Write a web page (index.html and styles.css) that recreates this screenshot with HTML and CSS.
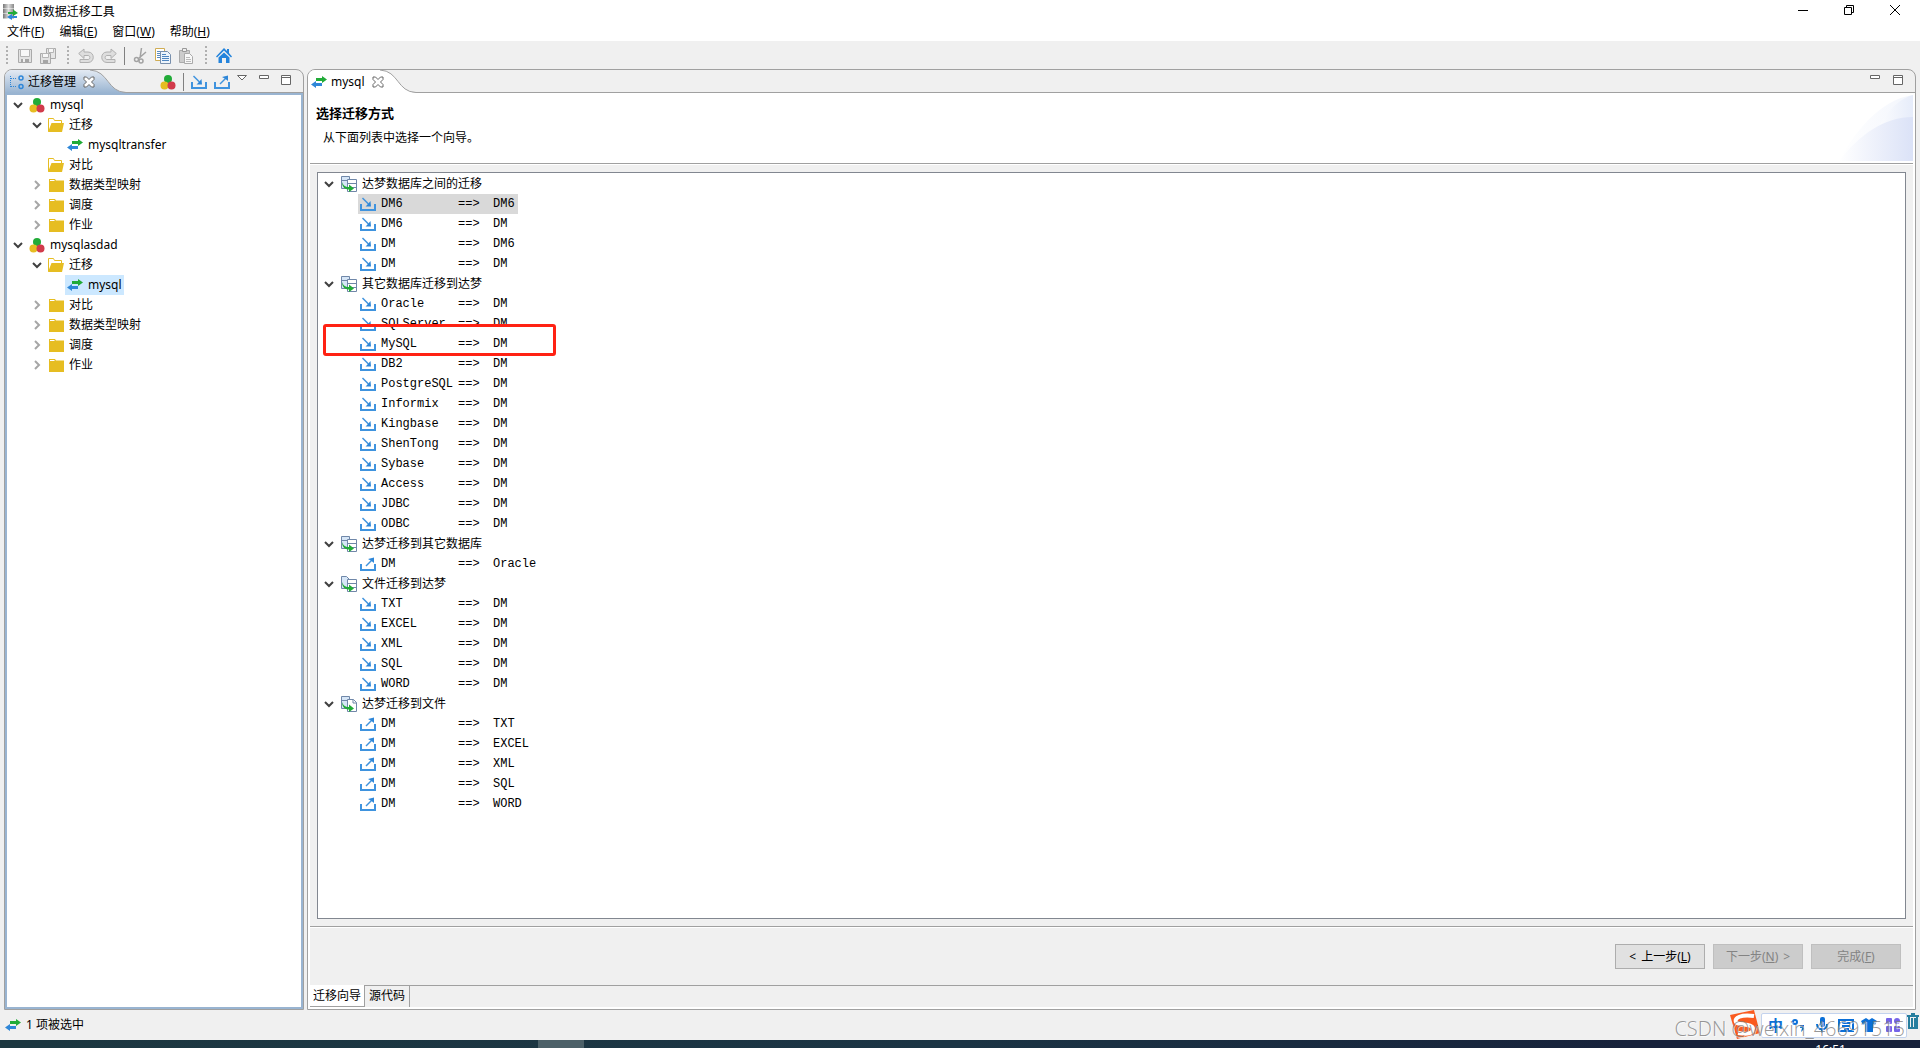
FILE: index.html
```html
<!DOCTYPE html>
<html lang="zh-CN">
<head>
<meta charset="utf-8">
<title>DM数据迁移工具</title>
<link rel="stylesheet" href="styles.css">
</head>
<body>
<svg class="sprite" aria-hidden="true">
  <defs>
    <linearGradient id="g-tab" gradientUnits="userSpaceOnUse" x1="0" y1="0" x2="0" y2="23"><stop offset="0" stop-color="#e3eaf3"/><stop offset="1" stop-color="#99b4d1"/></linearGradient>
    <linearGradient id="g-swoosh" x1="0" y1="0" x2="1" y2="0"><stop offset="0" stop-color="#fff"/><stop offset="1" stop-color="#dbe2f7"/></linearGradient>
    <linearGradient id="g-swoosh2" x1="0" y1="0" x2="1" y2="0"><stop offset="0" stop-color="#fff"/><stop offset="1" stop-color="#e6ecfa"/></linearGradient>
    <linearGradient id="g-db" x1="0" y1="0" x2="1" y2="0"><stop offset="0" stop-color="#777"/><stop offset=".5" stop-color="#ddd"/><stop offset="1" stop-color="#888"/></linearGradient>
  </defs>
  <symbol id="app" viewBox="0 0 16 16"><path fill="url(#g-db)" d="M0 0h11v4.500H0zM0 5h11v4.500H0zM0 10h11v4.500H0z"/><path fill="#21ab38" d="M5 8h5V5.500l5 3.500-5 3V10H5z"/><path fill="#2f87d8" d="M14 12h-5v-2L4 13l5 3v-2h5z"/></symbol>
  <symbol id="transfer" viewBox="0 0 16 16"><path fill="#21ab38" d="M5 4h6V2l5 3.500L11 9V7H5z"/><path fill="#2f87d8" d="M11 9H5V7l-5 3.500L5 14v-2h6z"/></symbol>
  <symbol id="balls" viewBox="0 0 16 16"><circle cx="8" cy="5" r="4" fill="#21ab38"/><circle cx="4.500" cy="11.500" r="4" fill="#e6bd22"/><circle cx="11.500" cy="11.500" r="4" fill="#d13b4b"/></symbol>
  <symbol id="down" viewBox="0 0 10 10"><path fill="none" stroke="#404040" stroke-width="2" d="M1 3l4 4 4-4"/></symbol>
  <symbol id="right" viewBox="0 0 10 10"><path fill="none" stroke="#a6a6a6" stroke-width="2" d="M3 1l4 4-4 4"/></symbol>
  <symbol id="open" viewBox="0 0 16 16"><path fill="#fff" stroke="#e6bd22" d="M.5 14.500v-13h5l1 2h7v3"/><path fill="#e6bd22" d="M3.500 6H16l-2 9H0z"/></symbol>
  <symbol id="folder" viewBox="0 0 16 16"><path fill="#e6bd22" d="M1 2h6l1 1.500h8V15H1z"/><path stroke="#fff" d="M2 3.500h4.500"/></symbol>
  <symbol id="import" viewBox="0 0 16 16"><path fill="none" stroke="#3f93de" stroke-width="2" d="M1 8v6h14V8"/><path fill="none" stroke="#3f93de" stroke-width="1.500" d="M2.500 2l6 6"/><path fill="#2f87d8" d="M11 10.500H5.500L8 8l2.500-3z"/></symbol>
  <symbol id="export" viewBox="0 0 16 16"><path fill="none" stroke="#3f93de" stroke-width="2" d="M1 8v6h14V8"/><path fill="none" stroke="#3f93de" stroke-width="1.500" d="M6 10l6-6"/><path fill="#2f87d8" d="M14 1.500V7l-2.500-2L8 3z"/></symbol>
  <symbol id="tables" viewBox="0 0 16 16"><path fill="#d6e6f7" stroke="#6f87a8" d="M.5.5h8v12h-8zM.5 4.500h8"/><path fill="#fff" stroke="#6f87a8" d="M6.500 3.500h9v12h-9zM6.500 7.500h9M6.500 11.500h9"/><path fill="#21ab38" d="M1 6c1 3 3 5 7 5V8.500l5 4-5 3.500v-2.500C4 13.500 1 11 1 6z"/></symbol>
  <symbol id="filetable" viewBox="0 0 16 16"><path fill="#d6e6f7" stroke="#6f87a8" d="M.5.5h5l3 3v9h-8z"/><path fill="#fff" stroke="#6f87a8" d="M6.500 3.500h9v12h-9zM6.500 7.500h9M6.500 11.500h9"/><path fill="#21ab38" d="M1 6c1 3 3 5 7 5V8.500l5 4-5 3.500v-2.500C4 13.500 1 11 1 6z"/></symbol>
  <symbol id="tablefile" viewBox="0 0 16 16"><path fill="#d6e6f7" stroke="#6f87a8" d="M.5.5h8v12h-8zM.5 4.500h8"/><path fill="#fff" stroke="#6f87a8" d="M6.500 3.500h6l3 3v9h-9zM12 3.500V7h3.500"/><path fill="#21ab38" d="M1 6c1 3 3 5 7 5V8.500l5 4-5 3.500v-2.500C4 13.500 1 11 1 6z"/></symbol>
  <symbol id="save" viewBox="0 0 16 16"><path fill="#e2e2e2" stroke="#aaa" d="M1.500 1.500h13v13h-13z"/><path fill="#f7f7f7" stroke="#b5b5b5" d="M3.500 1.500h9v7h-9z"/><path fill="#a5a5a5" d="M4 11h8v3H4z"/><path fill="#eee" d="M6 11h2v3H6z"/></symbol>
  <symbol id="saveall" viewBox="0 0 16 16"><path fill="#e6e6e6" stroke="#aaa" d="M6.500.5h9v10h-9z"/><path fill="#f7f7f7" stroke="#b5b5b5" d="M8.500.5h5v4h-5z"/><path fill="#e2e2e2" stroke="#aaa" d="M.5 5.500h10v10H.5z"/><path fill="#f7f7f7" stroke="#b5b5b5" d="M2.500 5.500h6v4h-6z"/><path fill="#a5a5a5" d="M3 12h5v3H3z"/></symbol>
  <symbol id="undo" viewBox="0 0 16 16"><path fill="#dedede" stroke="#b0b0b0" d="M.7 5.500L6 1v3h4c7 0 7 10.500 0 10.500H2v-3h8c2.500 0 2.500-4 0-4H6v3z"/></symbol>
  <symbol id="redo" viewBox="0 0 16 16"><path fill="#dedede" stroke="#b0b0b0" d="M15.300 5.500L10 1v3H6c-7 0-7 10.500 0 10.500h8v-3H6c-2.500 0-2.500-4 0-4h4v3z"/></symbol>
  <symbol id="cut" viewBox="0 0 16 16"><g fill="none" stroke="#a3a3a3" stroke-width="1.500"><path d="M9.500 0L8 10M14 4L6 11"/><circle cx="4.500" cy="11.500" r="2"/><circle cx="9" cy="13" r="2"/></g></symbol>
  <symbol id="copy" viewBox="0 0 16 16"><path fill="#fff" stroke="#d0ad54" d="M.5.5h9v12h-9z"/><path stroke="#5b8cc0" d="M2 3.500h5M2 5.500h5M2 7.500h3M2 9.500h3"/><path fill="#eef5fc" stroke="#788fac" d="M5.500 3.500h7l3 3v9h-10z"/><path stroke="#4f86c0" d="M7 6.500h4M7 8.500h7M7 10.500h7M7 12.500h7"/></symbol>
  <symbol id="paste" viewBox="0 0 16 16"><path fill="#ccc" stroke="#aaa" d="M1.500 2.500h10v12h-10z"/><path fill="#eee" stroke="#999" d="M4.500.5h4v3h-4z"/><path fill="#f8f8f8" stroke="#aaa" d="M6.500 5.500h5l3 3v7h-8z"/><path stroke="#bbb" d="M8 9.500h4M8 11.500h5M8 13.500h5"/></symbol>
  <symbol id="home" viewBox="0 0 16 16"><path fill="#2484dc" d="M8 0l3 3V1h2v4l3 3.500-1 1-7-7-7 7-1-1z"/><path fill="#2484dc" d="M8 4.500l5.500 5V15H10v-5H6v5H2.500V9.500z"/></symbol>
  <symbol id="nav" viewBox="0 0 16 16"><path fill="none" stroke="#2f87d8" stroke-dasharray="1 1" d="M1.500 2v12M2 4.500h6M2 12.500h6"/><circle cx="12" cy="4" r="2" fill="none" stroke="#2f87d8" stroke-width="1.500"/><circle cx="12" cy="12.500" r="2" fill="none" stroke="#2f87d8" stroke-width="1.500"/></symbol>
  <symbol id="close" viewBox="0 0 12 12"><path fill="#fff" stroke="#666" d="M1 1h2.500L6 3.500 8.500 1H11v2.500L8.500 6 11 8.500V11H8.500L6 8.500 3.500 11H1V8.500L3.500 6 1 3.500z"/></symbol>
  <symbol id="menu" viewBox="0 0 10 10"><path fill="#fff" stroke="#666" d="M.5.5h9L5 5z"/></symbol>
  <symbol id="min" viewBox="0 0 10 10"><path fill="#fff" stroke="#666" d="M.5.5h9v3h-9z"/></symbol>
  <symbol id="max" viewBox="0 0 10 10"><path fill="#fff" stroke="#666" d="M.5.5h9v9h-9zM.5 2.500h9"/></symbol>
</svg>

<header class="titlebar">
  <svg class="icon"><use href="#app"/></svg>
  <h1>DM数据迁移工具</h1>
  <div class="window-buttons">
    <button aria-label="最小化"><svg viewBox="0 0 12 12"><path d="M1 6.500h10"/></svg></button>
    <button aria-label="还原"><svg viewBox="0 0 12 12"><path d="M1.500 3.500h7v7h-7zM3.500 3V1.500h7v7H9"/></svg></button>
    <button aria-label="关闭"><svg viewBox="0 0 12 12"><path d="M1 1l10 10M11 1L1 11"/></svg></button>
  </div>
</header>
<nav class="menubar">
  <button>文件(<u>F</u>)</button><button>编辑(<u>E</u>)</button><button>窗口(<u>W</u>)</button><button>帮助(<u>H</u>)</button>
</nav>
<div class="toolbar">
  <i class="grip"></i>
  <button aria-label="保存"><svg class="icon"><use href="#save"/></svg></button>
  <button aria-label="全部保存"><svg class="icon"><use href="#saveall"/></svg></button>
  <i class="grip"></i>
  <button aria-label="撤销"><svg class="icon"><use href="#undo"/></svg></button>
  <button aria-label="重做"><svg class="icon"><use href="#redo"/></svg></button>
  <i class="sep"></i>
  <button aria-label="剪切"><svg class="icon"><use href="#cut"/></svg></button>
  <button aria-label="复制"><svg class="icon"><use href="#copy"/></svg></button>
  <button aria-label="粘贴"><svg class="icon"><use href="#paste"/></svg></button>
  <i class="grip"></i>
  <button aria-label="主页"><svg class="icon"><use href="#home"/></svg></button>
</div>

<main class="workbench">
  <section class="panel explorer">
    <div class="panel-head">
      <div class="tab">
        <svg class="icon"><use href="#nav"/></svg><span>迁移管理</span>
        <button aria-label="关闭视图"><svg class="close"><use href="#close"/></svg></button>
      </div>
      <svg class="tail" viewBox="0 0 36 23"><path fill="url(#g-tab)" d="M0 0C19 1 17 22 36 22.500V23H0z"/><path fill="none" stroke="#a0a0a0" d="M0 0C19 1 17 22 36 22.500"/></svg>
      <div class="view-tools">
        <button aria-label="新建工程"><svg class="icon"><use href="#balls"/></svg></button>
        <i class="sep"></i>
        <button aria-label="导入"><svg class="icon"><use href="#import"/></svg></button>
        <button aria-label="导出"><svg class="icon"><use href="#export"/></svg></button>
      </div>
      <div class="view-buttons">
        <button aria-label="视图菜单"><svg><use href="#menu"/></svg></button>
        <button aria-label="最小化视图"><svg><use href="#min"/></svg></button>
        <button aria-label="最大化视图"><svg><use href="#max"/></svg></button>
      </div>
    </div>
    <ul class="tree">
      <li class="l1"><svg class="arrow"><use href="#down"/></svg><svg class="icon"><use href="#balls"/></svg>mysql</li>
      <li class="l2"><svg class="arrow"><use href="#down"/></svg><svg class="icon"><use href="#open"/></svg>迁移</li>
      <li class="l3"><a href="#t1"><svg class="icon"><use href="#transfer"/></svg>mysqltransfer</a></li>
      <li class="l2"><svg class="arrow"></svg><svg class="icon"><use href="#open"/></svg>对比</li>
      <li class="l2"><svg class="arrow"><use href="#right"/></svg><svg class="icon"><use href="#folder"/></svg>数据类型映射</li>
      <li class="l2"><svg class="arrow"><use href="#right"/></svg><svg class="icon"><use href="#folder"/></svg>调度</li>
      <li class="l2"><svg class="arrow"><use href="#right"/></svg><svg class="icon"><use href="#folder"/></svg>作业</li>
      <li class="l1"><svg class="arrow"><use href="#down"/></svg><svg class="icon"><use href="#balls"/></svg>mysqlasdad</li>
      <li class="l2"><svg class="arrow"><use href="#down"/></svg><svg class="icon"><use href="#open"/></svg>迁移</li>
      <li class="l3"><a href="#t2" class="selected"><svg class="icon"><use href="#transfer"/></svg>mysql</a></li>
      <li class="l2"><svg class="arrow"><use href="#right"/></svg><svg class="icon"><use href="#folder"/></svg>对比</li>
      <li class="l2"><svg class="arrow"><use href="#right"/></svg><svg class="icon"><use href="#folder"/></svg>数据类型映射</li>
      <li class="l2"><svg class="arrow"><use href="#right"/></svg><svg class="icon"><use href="#folder"/></svg>调度</li>
      <li class="l2"><svg class="arrow"><use href="#right"/></svg><svg class="icon"><use href="#folder"/></svg>作业</li>
    </ul>
  </section>

  <section class="panel editor">
    <div class="panel-head">
      <div class="tab">
        <svg class="icon"><use href="#transfer"/></svg><span>mysql</span>
        <button aria-label="关闭编辑器"><svg class="close"><use href="#close"/></svg></button>
      </div>
      <svg class="tail" viewBox="0 0 36 23"><path fill="#fff" d="M0 0C19 1 17 22 36 22.500V23H0z"/><path fill="none" stroke="#a0a0a0" d="M0 0C19 1 17 22 36 22.500"/></svg>
      <div class="view-buttons">
        <button aria-label="最小化编辑区"><svg><use href="#min"/></svg></button>
        <button aria-label="最大化编辑区"><svg><use href="#max"/></svg></button>
      </div>
    </div>
    <div class="wizard">
      <div class="wizard-head">
        <div>
          <h2>选择迁移方式</h2>
          <p>从下面列表中选择一个向导。</p>
        </div>
        <svg class="swoosh" viewBox="0 0 74 66"><path fill="url(#g-swoosh2)" opacity=".5" d="M0 66C15 38 40 5 74 0V66z"/><path fill="url(#g-swoosh2)" d="M34 42C44 22 56 5 74 0V66z"/><path fill="url(#g-swoosh)" d="M0 66C20 40 45 22 74 22V66z"/></svg>
      </div>
      <div class="choices">
        <div class="group"><svg class="arrow"><use href="#down"/></svg><svg class="icon"><use href="#tables"/></svg>达梦数据库之间的迁移</div>
        <ul>
          <li class="current"><svg class="icon"><use href="#import"/></svg><span>DM6</span><span>==&gt;</span><span>DM6</span></li>
          <li><svg class="icon"><use href="#import"/></svg><span>DM6</span><span>==&gt;</span><span>DM</span></li>
          <li><svg class="icon"><use href="#import"/></svg><span>DM</span><span>==&gt;</span><span>DM6</span></li>
          <li><svg class="icon"><use href="#import"/></svg><span>DM</span><span>==&gt;</span><span>DM</span></li>
        </ul>
        <div class="group"><svg class="arrow"><use href="#down"/></svg><svg class="icon"><use href="#tables"/></svg>其它数据库迁移到达梦</div>
        <ul>
          <li><svg class="icon"><use href="#import"/></svg><span>Oracle</span><span>==&gt;</span><span>DM</span></li>
          <li><svg class="icon"><use href="#import"/></svg><span>SQLServer</span><span>==&gt;</span><span>DM</span></li>
          <li class="marked"><svg class="icon"><use href="#import"/></svg><span>MySQL</span><span>==&gt;</span><span>DM</span></li>
          <li><svg class="icon"><use href="#import"/></svg><span>DB2</span><span>==&gt;</span><span>DM</span></li>
          <li><svg class="icon"><use href="#import"/></svg><span>PostgreSQL</span><span>==&gt;</span><span>DM</span></li>
          <li><svg class="icon"><use href="#import"/></svg><span>Informix</span><span>==&gt;</span><span>DM</span></li>
          <li><svg class="icon"><use href="#import"/></svg><span>Kingbase</span><span>==&gt;</span><span>DM</span></li>
          <li><svg class="icon"><use href="#import"/></svg><span>ShenTong</span><span>==&gt;</span><span>DM</span></li>
          <li><svg class="icon"><use href="#import"/></svg><span>Sybase</span><span>==&gt;</span><span>DM</span></li>
          <li><svg class="icon"><use href="#import"/></svg><span>Access</span><span>==&gt;</span><span>DM</span></li>
          <li><svg class="icon"><use href="#import"/></svg><span>JDBC</span><span>==&gt;</span><span>DM</span></li>
          <li><svg class="icon"><use href="#import"/></svg><span>ODBC</span><span>==&gt;</span><span>DM</span></li>
        </ul>
        <div class="group"><svg class="arrow"><use href="#down"/></svg><svg class="icon"><use href="#tables"/></svg>达梦迁移到其它数据库</div>
        <ul>
          <li><svg class="icon"><use href="#export"/></svg><span>DM</span><span>==&gt;</span><span>Oracle</span></li>
        </ul>
        <div class="group"><svg class="arrow"><use href="#down"/></svg><svg class="icon"><use href="#filetable"/></svg>文件迁移到达梦</div>
        <ul>
          <li><svg class="icon"><use href="#import"/></svg><span>TXT</span><span>==&gt;</span><span>DM</span></li>
          <li><svg class="icon"><use href="#import"/></svg><span>EXCEL</span><span>==&gt;</span><span>DM</span></li>
          <li><svg class="icon"><use href="#import"/></svg><span>XML</span><span>==&gt;</span><span>DM</span></li>
          <li><svg class="icon"><use href="#import"/></svg><span>SQL</span><span>==&gt;</span><span>DM</span></li>
          <li><svg class="icon"><use href="#import"/></svg><span>WORD</span><span>==&gt;</span><span>DM</span></li>
        </ul>
        <div class="group"><svg class="arrow"><use href="#down"/></svg><svg class="icon"><use href="#tablefile"/></svg>达梦迁移到文件</div>
        <ul>
          <li><svg class="icon"><use href="#export"/></svg><span>DM</span><span>==&gt;</span><span>TXT</span></li>
          <li><svg class="icon"><use href="#export"/></svg><span>DM</span><span>==&gt;</span><span>EXCEL</span></li>
          <li><svg class="icon"><use href="#export"/></svg><span>DM</span><span>==&gt;</span><span>XML</span></li>
          <li><svg class="icon"><use href="#export"/></svg><span>DM</span><span>==&gt;</span><span>SQL</span></li>
          <li><svg class="icon"><use href="#export"/></svg><span>DM</span><span>==&gt;</span><span>WORD</span></li>
        </ul>
      </div>
      <div class="wizard-buttons">
        <button><span>&lt;</span><span>上一步(<u>L</u>)</span></button>
        <button disabled><span>下一步(<u>N</u>)</span><span>&gt;</span></button>
        <button disabled><span>完成(<u>F</u>)</span></button>
      </div>
      <div class="page-tabs"><button class="active">迁移向导</button><button>源代码</button></div>
    </div>
  </section>
</main>

<footer class="statusbar"><svg class="icon"><use href="#transfer"/></svg><span>1 项被选中</span></footer>
<div class="taskbar"><i class="task"></i><time>16:51</time></div>

<div class="ime">
  <svg class="ime-logo" viewBox="0 0 32 30"><path fill="#fa5a1e" d="M1 5L25 0l6 23-23 6z"/><path fill="none" stroke="#fff" stroke-width="4" d="M25 6C12 4 5 8 7 12s17 1 17 7-9 5-15 4"/></svg>
  <div class="ime-bar">
    <b>中</b>
    <svg viewBox="0 0 16 16"><circle cx="4" cy="5" r="2" fill="none" stroke="#0a6fd8" stroke-width="2"/><path fill="#0a6fd8" d="M9 8h4v4l-3 3 1-4H9z"/></svg>
    <svg viewBox="0 0 16 16"><rect x="6" width="5" height="10" rx="2" fill="#0a6fd8"/><path fill="none" stroke="#0a6fd8" stroke-width="2" d="M3 7c0 7 10 7 10 0M8 12v4"/></svg>
    <svg viewBox="0 0 16 16"><path fill="none" stroke="#0a6fd8" stroke-width="2" d="M1 3h14v11H1zM4 6h8M4 9h8M6 12h5"/></svg>
    <svg viewBox="0 0 16 16"><path fill="#0a6fd8" d="M0 4l5-3 3 2 3-2 5 3-2 4-2-1v8H4V7L2 8z"/></svg>
    <svg viewBox="0 0 16 16"><g fill="#7563e8"><rect x="1" y="1" width="6" height="6" rx="1"/><rect x="9" y="1" width="6" height="6" rx="3"/><rect x="1" y="9" width="6" height="6" rx="1"/><rect x="9" y="9" width="6" height="6" rx="1"/></g></svg>
  </div>
  <svg class="trash" viewBox="0 0 12 16"><path fill="none" stroke="#277e9e" stroke-width="2" d="M0 3h12M4 1h4M2 4v11h8V4M5 5v9M8 5v9"/></svg>
</div>
<div class="watermark">CSDN @weixin_46691515</div>
</body>
</html>
```
FILE: styles.css
```css
*, *::after { box-sizing: border-box; }
html, body { height: 100%; }
body {
  margin: 0;
  display: flex;
  flex-direction: column;
  position: relative;
  overflow: hidden;
  background: #f0f0f0;
  color: #000;
  font: 12px/20px "Noto Sans", "Noto Sans CJK SC", sans-serif;
}
h1, h2, p, ul { margin: 0; padding: 0; font-size: 12px; font-weight: 400; list-style: none; }
button { flex: none; border: 0; padding: 0; background: none; font: inherit; color: inherit; display: flex; align-items: center; justify-content: center; }
a { color: inherit; text-decoration: none; }
svg { display: block; flex: none; }
.sprite { position: absolute; width: 0; height: 0; }
.icon { width: 16px; height: 16px; }
.arrow { width: 10px; height: 10px; }
.close { width: 12px; height: 12px; }
.sep { width: 1px; height: 18px; background: #808080; }

.titlebar { display: flex; align-items: center; height: 23px; padding: 0 19px 0 3px; gap: 4px; background: #fff; }
.titlebar h1 { flex: 1; }
.window-buttons { display: flex; gap: 34px; padding-bottom: 3px; }
.window-buttons svg { width: 12px; height: 12px; fill: none; stroke: #000; }
.menubar { display: flex; height: 18px; padding-left: 7px; gap: 15px; background: #fff; }

.toolbar { display: flex; align-items: center; height: 28px; padding: 2px 0 0 6px; gap: 7px; }
.grip { width: 2px; height: 20px; margin-right: 2px; background: repeating-linear-gradient(#b0b0b0 0 2px, transparent 2px 4px); }
.grip:not(:first-child) { margin-left: 4px; }

.workbench { flex: 1; min-height: 0; display: flex; gap: 3px; padding: 0 4px; }
.panel { display: flex; flex-direction: column; border: 1px solid #a0a0a0; border-radius: 8px 8px 0 0; overflow: hidden; }
.explorer { flex: 0 0 300px; }
.editor { flex: 1; min-width: 0; }
.panel-head { display: flex; height: 23px; box-shadow: inset 0 -1px #a0a0a0; }
.tab { flex: none; position: relative; z-index: 1; display: flex; align-items: center; line-height: 22px; white-space: nowrap; }
.tail { width: 36px; height: 23px; }
.explorer .tab { width: 85px; padding-left: 4px; gap: 3px; background: linear-gradient(#e3eaf3, #99b4d1); }
.explorer .tab button { margin-left: 4px; }
.editor .tab { width: 72px; padding-left: 3px; gap: 4px; background: #fff; }
.editor .tab button { margin-left: 3px; }
.view-tools { display: flex; align-items: center; gap: 7px; margin-left: auto; }
.view-buttons { display: flex; align-items: flex-start; padding: 5px 12px 0 0; gap: 13px; }
.explorer .view-buttons { padding: 5px 12px 0 7px; gap: 12px; }
.editor .view-buttons { margin-left: auto; }
.view-buttons svg { width: 10px; height: 10px; }

.tree { flex: 1; border: 2px solid #99b4d1; background: #fff; }
.tree li { display: flex; align-items: center; height: 20px; }
.tree .l1 { padding-left: 6px; }
.tree .l1 .icon { margin: 0 5px 0 6px; }
.tree .l2 { padding-left: 25px; }
.tree .l2 .icon { margin: 0 5px 0 6px; }
.tree .l3 { padding-left: 58px; }
.tree a { display: flex; align-items: center; gap: 5px; padding: 0 2px; }
.tree .selected { background: #cce8ff; }

.wizard { flex: 1; min-height: 0; display: flex; flex-direction: column; border: 2px solid #fff; background: #f0f0f0; }
.wizard-head { display: flex; justify-content: space-between; align-items: flex-start; height: 70px; border-bottom: 1px solid #fff; box-shadow: inset 0 -1px #a0a0a0; background: #fff; padding-left: 6px; }
.wizard-head h2 { font-size: 13px; font-weight: 700; line-height: 20px; margin-top: 8px; }
.wizard-head p { padding: 5px 0 0 7px; }
.swoosh { width: 74px; height: 66px; }
.choices { flex: 1; min-height: 0; margin: 7px; padding-top: 1px; border: 1px solid #828790; background: #fff; }
.group { display: flex; align-items: center; height: 20px; padding-left: 6px; }
.group .icon { margin: 0 5px 0 7px; }
.choices ul { padding-left: 40px; font-family: "Liberation Mono", monospace; }
.choices li { position: relative; display: grid; grid-template-columns: 21px 77px 35px 25px; align-items: center; width: 160px; height: 20px; padding-left: 2px; }
.current { background: #d9d9d9; }
.marked::after { content: ""; position: absolute; left: -35px; top: -10px; width: 233px; height: 32px; border: 3px solid #ff2213; border-radius: 3px; }

.wizard-buttons { display: flex; justify-content: flex-end; gap: 8px; height: 59px; padding: 17px 12px 0 0; border-top: 1px solid #a0a0a0; box-shadow: inset 0 1px #fff; }
.wizard-buttons button { width: 90px; height: 25px; gap: 5px; border: 1px solid #adadad; background: #e1e1e1; }
.wizard-buttons button:disabled { border-color: #bfbfbf; background: #ccc; color: #838383; }
.page-tabs { display: flex; height: 22px; box-shadow: inset 0 1px #a0a0a0; }
.page-tabs button { padding: 0 4px; border-right: 1px solid #a0a0a0; }
.page-tabs .active { padding: 0 3px; background: #fff; border-bottom: 1px solid #a0a0a0; }

.statusbar { display: flex; align-items: center; height: 30px; padding-left: 5px; gap: 5px; }
.taskbar { display: flex; justify-content: space-between; height: 8px; padding: 0 74px 0 538px; overflow: hidden; background: linear-gradient(90deg, #1c3740, #1b3444 50%, #17223b 85%); }
.task { width: 46px; background: #4c6068; }
.taskbar time { color: #fff; line-height: 20px; }

.ime { position: absolute; right: 1px; bottom: 8px; display: flex; align-items: center; height: 30px; }
.ime-logo { width: 32px; height: 30px; }
.ime-bar { display: flex; align-items: center; justify-content: space-between; width: 146px; height: 25px; padding: 0 5px 0 6px; border: 1px solid #c3d3ee; border-radius: 2px; background: #fff; color: #0a6fd8; }
.ime-bar b { font-size: 15px; }
.ime-bar svg { width: 16px; height: 16px; }
.trash { width: 12px; height: 16px; margin-bottom: 8px; }
.watermark { position: absolute; right: 15px; bottom: 6px; color: #808080d0; font: 20px/26px "Open Sans", sans-serif; font-weight: 300; text-shadow: 1px 1px #fffa; }
```
